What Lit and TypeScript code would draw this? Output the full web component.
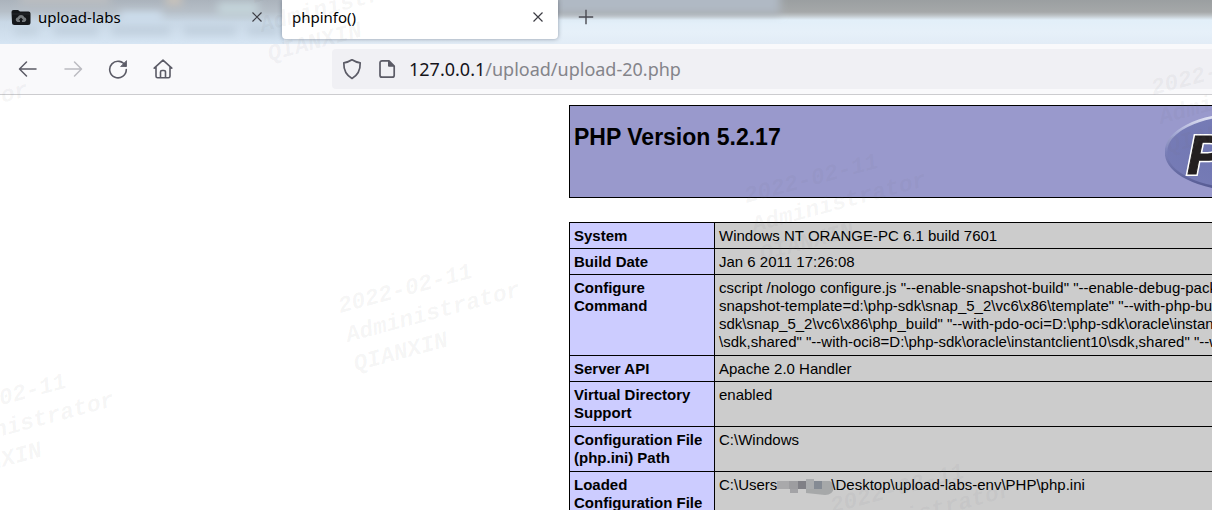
import { LitElement, html, css, svg } from "lit";
import { customElement } from "lit/decorators.js";
import { styleMap } from "lit/directives/style-map.js";

interface InfoRow {
  name: string[];
  value: string[];
  redacted?: string;
}

const ROWS: InfoRow[] = [
  { name: ["System"], value: ["Windows NT ORANGE-PC 6.1 build 7601"] },
  { name: ["Build Date"], value: ["Jan 6 2011 17:26:08"] },
  {
    name: ["Configure", "Command"],
    value: [
      'cscript /nologo configure.js "--enable-snapshot-build" "--enable-debug-pack"',
      'snapshot-template=d:\\php-sdk\\snap_5_2\\vc6\\x86\\template" "--with-php-build',
      'sdk\\snap_5_2\\vc6\\x86\\php_build" "--with-pdo-oci=D:\\php-sdk\\oracle\\instantc',
      '\\sdk,shared" "--with-oci8=D:\\php-sdk\\oracle\\instantclient10\\sdk,shared" "--wi',
    ],
  },
  { name: ["Server API"], value: ["Apache 2.0 Handler"] },
  { name: ["Virtual Directory", "Support"], value: ["enabled"] },
  { name: ["Configuration File", "(php.ini) Path"], value: ["C:\\Windows"] },
  {
    name: ["Loaded", "Configuration File"],
    value: ["C:\\Users"],
    redacted: "\\Desktop\\upload-labs-env\\PHP\\php.ini",
  },
];

// Anchor points of the repeated desktop watermark.
const MARKS = [
  { x: 255, y: 6 },
  { x: -151, y: 116 },
  { x: 341, y: 316 },
  { x: -65, y: 426 },
  { x: 747, y: 206 },
  { x: 1154, y: 98 },
  { x: 833, y: 516 },
];

@customElement("php-logo")
export class PhpLogo extends LitElement {
  static styles = css`
    :host { display: block; }
    svg { display: block; }
    .letters {
      font: italic bold 56px "Liberation Sans", Arial, sans-serif;
      fill: #231f20;
      stroke: #231f20;
      stroke-width: 1px;
    }
    .halo { stroke: #ffffff; stroke-width: 4px; }
  `;

  render() {
    return html`<svg width="146" height="78" viewBox="0 0 146 78" role="img" aria-label="PHP logo">
      <defs>
        <radialGradient id="face" cx="50%" cy="50%" r="60%">
          <stop offset="0" stop-color="#6f76b2" />
          <stop offset="1" stop-color="#777cb6" />
        </radialGradient>
        <linearGradient id="rim" x1="0" y1="0" x2="0" y2="1">
          <stop offset="0" stop-color="#e6e8f6" />
          <stop offset="0.25" stop-color="#a4a9d4" />
          <stop offset="0.5" stop-color="#7b80b8" />
          <stop offset="1" stop-color="#555a92" />
        </linearGradient>
      </defs>
      <ellipse cx="73" cy="39" rx="72" ry="37" fill="url(#face)" stroke="url(#rim)" stroke-width="2.5" />
      <text class="letters halo" x="22" y="61" aria-hidden="true">PHP</text>
      <text class="letters" x="22" y="61">PHP</text>
    </svg>`;
  }
}

@customElement("browser-chrome")
export class BrowserChrome extends LitElement {
  static styles = css`
    :host {
      display: block;
      font-family: "Noto Sans", "Open Sans", sans-serif;
      color: #15141a;
    }
    * { box-sizing: border-box; }
    svg { display: block; flex: none; }
    button {
      border: 0;
      padding: 0;
      background: none;
      color: inherit;
      font: inherit;
      display: grid;
      place-items: center;
    }
    .tabs {
      position: relative;
      display: flex;
      align-items: flex-start;
      height: 44px;
      overflow: hidden;
      background: linear-gradient(#9b9fa1 0, #a5a8a9 12px, #b9bec1 15px, #e2eff9 20px, #e6f0f9 32px, #e2ecf6 44px);
    }
    .glass {
      position: absolute;
      top: 0;
      left: 0;
    }
    .tab {
      position: relative;
      display: flex;
      align-items: center;
      height: 39px;
      padding: 0 12px 6px 10px;
      font-size: 15px;
      line-height: 20px;
    }
    .tab .label { flex: 1; text-align: left; color: #000; }
    .back { width: 282px; padding-right: 17px; gap: 6px; }
    .front {
      width: 276px;
      background: #ffffff;
      border-radius: 0 0 4px 4px;
      box-shadow: 0 0 4px rgba(60, 70, 90, 0.5);
    }
    .close { width: 16px; height: 16px; }
    .add { position: relative; width: 16px; height: 34px; margin-left: 20px; color: #4a4a52; }
    .bar {
      display: flex;
      align-items: center;
      height: 51px;
      padding-left: 18px;
      background: #f9f9fb;
      border-bottom: 1px solid #cccccf;
      color: #5b5b66;
      overflow: hidden;
    }
    .nav { display: flex; gap: 25px; flex: none; width: 314px; }
    .nav button { width: 20px; height: 20px; }
    .nav button:disabled { color: #bbbbc1; }
    .address {
      flex: 1;
      display: flex;
      align-items: center;
      height: 40px;
      padding-left: 10px;
      border-radius: 4px 0 0 4px;
      background: #f0f0f4;
      font-size: 18px;
      line-height: 24px;
    }
    .shield { margin-right: 15px; }
    .page { margin-right: 12px; }
    .host { color: #15141a; }
    input {
      flex: 1;
      min-width: 0;
      border: 0;
      padding: 0;
      outline: 0;
      background: none;
      font: inherit;
      color: #84848a;
    }
  `;

  private closeIcon() {
    return svg`<svg width="12" height="12" viewBox="0 0 12 12" fill="none" stroke="#3d3d44" stroke-width="1.2"><path d="M1.5 1.5l9 9M10.5 1.5l-9 9" /></svg>`;
  }

  render() {
    return html`
      <div class="tabs" role="tablist">
        <svg class="glass" width="800" height="44" viewBox="0 0 800 44" aria-hidden="true">
          <defs>
            <linearGradient id="sky" x1="0" y1="0" x2="0" y2="1">
              <stop offset="0" stop-color="#abb3bc" />
              <stop offset="0.26" stop-color="#b6bfc8" />
              <stop offset="0.5" stop-color="#c9d8e6" />
              <stop offset="1" stop-color="#d6e5f3" />
            </linearGradient>
            <filter id="soft" x="-20%" y="-60%" width="140%" height="220%"><feGaussianBlur stdDeviation="4" /></filter>
          </defs>
          <rect width="284" height="44" fill="url(#sky)" />
          <g filter="url(#soft)">
            <rect x="556" y="-10" width="224" height="24" fill="#b0b9c4" />
            <rect x="120" y="12" width="42" height="9" fill="#cfe0f0" />
            <rect x="218" y="2" width="40" height="14" fill="#c3d3d9" />
            <rect x="20" y="-6" width="90" height="10" fill="#bdbfc1" />
            <rect x="166" y="-5" width="16" height="10" fill="#ccc5bb" />
            <rect x="14" y="27" width="24" height="7" fill="#bfcedb" />
            <rect x="54" y="27" width="44" height="7" fill="#bccbd9" />
            <rect x="112" y="27" width="58" height="7" fill="#bccbd9" />
            <rect x="184" y="27" width="52" height="7" fill="#bccbd9" />
            <rect x="248" y="27" width="30" height="7" fill="#bccbd9" />
          </g>
        </svg>
        <div class="tab back" role="tab" aria-selected="false">
          <svg width="22" height="18" viewBox="0 0 22 18" aria-hidden="true">
            <path d="M1.500 4a2 2 0 0 1 2-2h4.500l2 1.500H18.500a2 2 0 0 1 2 2v9a2.500 2.500 0 0 1-2.500 2.500H4.500A2.500 2.500 0 0 1 2 14.500z" fill="#15171a" />
            <path d="M2 6h18" stroke="#2c2f33" stroke-width="0.8" />
            <path d="M7.500 14a2.400 2.400 0 0 1 .3-4.700 3.400 3.400 0 0 1 6.500 0 2.400 2.400 0 0 1 .2 4.700z" fill="#777b7e" />
            <path d="M11 9.500l2.500 2.800H12v2.700h-2v-2.700H8.500z" fill="#15171a" />
          </svg>
          <span class="label">upload-labs</span>
          <button class="close" aria-label="Close upload-labs">${this.closeIcon()}</button>
        </div>
        <div class="tab front" role="tab" aria-selected="true">
          <span class="label">phpinfo()</span>
          <button class="close" aria-label="Close phpinfo()">${this.closeIcon()}</button>
        </div>
        <button class="add" aria-label="New tab">
          <svg width="16" height="16" viewBox="0 0 16 16" fill="none" stroke="currentColor" stroke-width="1.4"><path d="M8 .8v14.400M.8 8h14.400" /></svg>
        </button>
      </div>
      <div class="bar">
        <div class="nav">
          <button aria-label="Back">
            <svg width="20" height="20" viewBox="0 0 20 20" fill="none" stroke="currentColor" stroke-width="1.5" stroke-linecap="round" stroke-linejoin="round"><path d="M18 10H1.800M8.500 3L1.500 10l7 7" /></svg>
          </button>
          <button aria-label="Forward" disabled>
            <svg width="20" height="20" viewBox="0 0 20 20" fill="none" stroke="currentColor" stroke-width="1.5" stroke-linecap="round" stroke-linejoin="round"><path d="M2 10h16.200M11.500 3l7 7-7 7" /></svg>
          </button>
          <button aria-label="Reload">
            <svg width="20" height="20" viewBox="0 0 20 20" fill="none" stroke="currentColor" stroke-width="1.6" stroke-linecap="round"><path d="M17.500 7A8.300 8.300 0 1 0 18.300 10.500" /><path d="M18.500 2v5.500h-5.500z" fill="currentColor" stroke-width="0.8" stroke-linejoin="round" /></svg>
          </button>
          <button aria-label="Home">
            <svg width="20" height="20" viewBox="0 0 20 20" fill="none" stroke="currentColor" stroke-width="1.600" stroke-linecap="round" stroke-linejoin="round"><path d="M1.200 9.200L10 1.200l8.800 8M3 8v9.200a1.600 1.600 0 0 0 1.600 1.600h10.800a1.600 1.600 0 0 0 1.600-1.600V8M7.500 18.500v-5.500a1.500 1.500 0 0 1 1.500-1.500h2a1.500 1.500 0 0 1 1.500 1.500v5.500" /></svg>
          </button>
        </div>
        <label class="address">
          <svg class="shield" width="20" height="22" viewBox="0 0 20 22" fill="none" stroke="currentColor" stroke-width="1.700" stroke-linejoin="round" aria-hidden="true"><path d="M10 1.800c2.500 1.700 5 2.600 8.200 3 .2 7-2.200 12.400-8.200 15.600C4 17.200 1.600 11.800 1.800 4.800 5 4.400 7.500 3.500 10 1.800z" /></svg>
          <svg class="page" width="20" height="20" viewBox="0 0 20 20" fill="none" stroke="currentColor" stroke-width="1.700" stroke-linejoin="round" aria-hidden="true"><path d="M12 1.800H5A2 2 0 0 0 3 3.800v12.400a2 2 0 0 0 2 2h10.200a2 2 0 0 0 2-2V7z" /><path d="M11.500 1.800V7.200h5.700z" fill="currentColor" stroke-width="1" /></svg>
          <span class="host">127.0.0.1</span><input type="text" aria-label="Address" .value=${"/upload/upload-20.php"} />
        </label>
      </div>
    `;
  }
}

@customElement("app-root")
export class AppRoot extends LitElement {
  static styles = css`
    :host {
      display: block;
      position: relative;
      height: 100vh;
      overflow: hidden;
      background: #ffffff;
      font-family: "Liberation Sans", Arial, sans-serif;
      color: #000;
    }
    * { box-sizing: border-box; }
    main {
      padding: 10px 0 0 calc(50% - 37px);
    }
    .banner {
      display: flex;
      justify-content: space-between;
      align-items: flex-start;
      width: 747px;
      height: 93px;
      padding: 7px 4px;
      border: 1px solid #000;
      background: #9999cc;
    }
    h1 {
      margin: 11px 0 0;
      font-size: 23px;
      line-height: 27px;
    }
    table {
      width: 747px;
      margin-top: 24px;
      border-collapse: collapse;
      table-layout: fixed;
      font-size: 15px;
      line-height: 18px;
    }
    .names { width: 145px; }
    th, td {
      padding: 4px;
      border: 1px solid #000;
      text-align: left;
      vertical-align: top;
      white-space: nowrap;
    }
    th { background: #ccccff; }
    td { background: #cccccc; overflow: hidden; }
    .single th, .single td { padding-bottom: 3px; }
    .line { display: block; }
    .mosaic { display: inline-block; vertical-align: top; margin: 0 -3px 0 0; }
    .marks {
      position: absolute;
      inset: 0;
      overflow: hidden;
      pointer-events: none;
    }
    .mark {
      position: absolute;
      transform: rotate(-15deg);
      transform-origin: 0 24px;
      margin-top: -24px;
      font: italic bold 23px/30px "Liberation Mono", monospace;
      white-space: pre;
      color: rgba(120, 120, 125, 0.07);
    }
  `;

  private mosaic() {
    return html`<svg class="mosaic" width="57" height="20" viewBox="0 0 57 20" role="img" aria-label="redacted">
      <path d="M0 5h12v8H0z" fill="#a9a9ab" />
      <path d="M12 5h9v8h-9z" fill="#9d9da0" />
      <path d="M21 5h8v8h-8z" fill="#808086" />
      <path d="M13 13h8v4h-8z" fill="#a3a3a6" />
      <path d="M29 3h8v10h-8z" fill="#aaacae" />
      <path d="M37 5h8v8h-8z" fill="#858b94" />
      <path d="M45 5h8q4 2 4 6-1 8-9 8l-19-2v-4h16z" fill="#a6a8a9" />
    </svg>`;
  }

  render() {
    return html`
      <browser-chrome></browser-chrome>
      <main>
        <header class="banner">
          <h1>PHP Version 5.2.17</h1>
          <php-logo></php-logo>
        </header>
        <table>
          <colgroup><col class="names" /><col /></colgroup>
          <tbody>
            ${ROWS.map(
              (row) => html`<tr class=${row.name.length === 1 ? "single" : ""}>
                <th scope="row">${row.name.map((part) => html`<span class="line">${part}</span>`)}</th>
                <td>${row.value.map((part) => html`<span class="line">${part}${row.redacted ? html`${this.mosaic()}${row.redacted}` : ""}</span>`)}</td>
              </tr>`
            )}
          </tbody>
        </table>
      </main>
      <div class="marks" aria-hidden="true">
        ${MARKS.map(
          (m) => html`<div class="mark" style=${styleMap({ left: `${m.x}px`, top: `${m.y}px` })}>${"2022-02-11\nAdministrator\nQIANXIN"}</div>`
        )}
      </div>
    `;
  }
}
